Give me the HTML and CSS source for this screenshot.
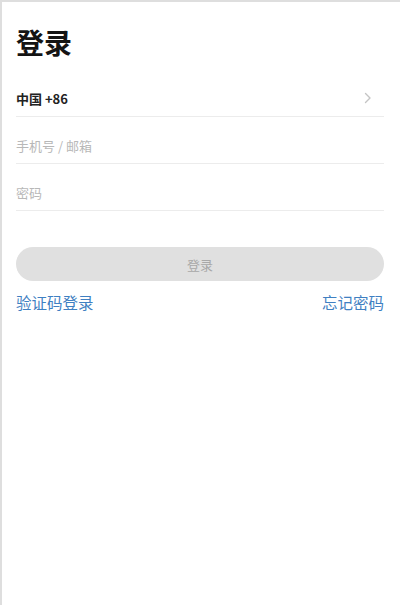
FILE: index.html
```html
<!DOCTYPE html>
<html lang="zh-CN">
<head>
<meta charset="utf-8">
<title>登录</title>
<link rel="stylesheet" href="styles.css">
</head>
<body>
<div class="page">
  <h1 class="title">登录</h1>
  <div class="row">
    <span class="region">中国 +86</span>
    <svg class="chev" width="8" height="12" viewBox="0 0 8 12"><polyline points="1.5,1.5 6,6 1.5,10.5" fill="none" stroke="#c4c4c4" stroke-width="1.4" stroke-linecap="round" stroke-linejoin="round"/></svg>
  </div>
  <div class="row"><span class="ph">手机号 / 邮箱</span></div>
  <div class="row"><span class="ph">密码</span></div>
  <button class="btn">登录</button>
  <div class="links">
    <a class="link">验证码登录</a>
    <a class="link">忘记密码</a>
  </div>
</div>
</body>
</html>
```
FILE: styles.css
```css
html, body {
  margin: 0;
  padding: 0;
  background: #fff;
}
body {
  font-family: "Noto Sans CJK SC", "Noto Sans", sans-serif;
}
.page {
  box-sizing: border-box;
  height: 605px;
  border-top: 2px solid #dedede;
  border-left: 2px solid #dedede;
  padding: 0 16px 0 14px;
}
.title {
  margin: 20px 0 8px;
  font-size: 28px;
  line-height: 40px;
  font-weight: 700;
  color: #141414;
}
.row {
  display: flex;
  align-items: center;
  justify-content: space-between;
  height: 36px;
  padding-top: 10px;
  border-bottom: 1px solid #ececec;
}
.region {
  font-size: 13px;
  font-weight: 600;
  color: #222;
}
.chev {
  margin-right: 12px;
}
.ph {
  font-size: 13px;
  color: #b8b8b8;
}
.btn {
  display: block;
  width: 100%;
  height: 34px;
  margin-top: 36px;
  border: none;
  border-radius: 17px;
  background: #e0e0e0;
  color: #a8a8a8;
  font-family: inherit;
  font-size: 13px;
  padding: 0;
}
.links {
  display: flex;
  justify-content: space-between;
  margin-top: 11px;
  line-height: 20px;
}
.link {
  font-size: 15.5px;
  color: #3f80c2;
}
```
